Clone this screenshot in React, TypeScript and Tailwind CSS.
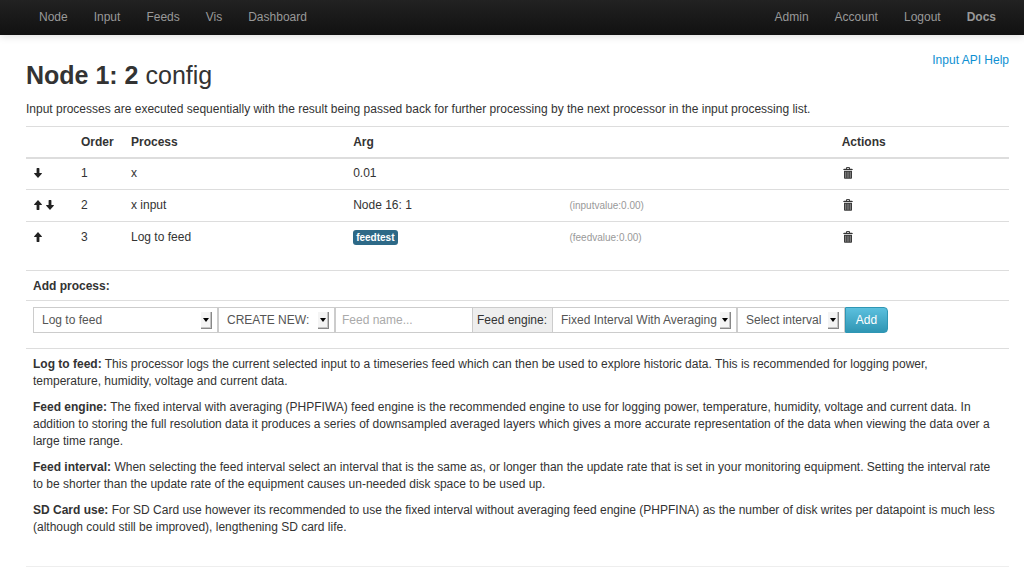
import type { ReactNode } from "react";

function ArrowIcon({ up = false }: { up?: boolean }) {
  return (
    <svg viewBox="0 0 8 10" className={up ? "h-[10px] w-2" : "h-[10px] w-2 rotate-180"} fill="#222" aria-hidden="true">
      <path d="M4 0 L8 4.6 Q8 5 7.6 5 H5.4 V9.6 Q5.4 10 5 10 H3 Q2.6 10 2.6 9.6 V5 H0.4 Q0 5 0 4.6 Z" />
    </svg>
  );
}

function TrashIcon() {
  return (
    <svg viewBox="0 0 10 12" className="h-3 w-[10px]" aria-hidden="true">
      <path d="M3.5 2 V0.5 H6.5 V2" fill="none" stroke="#444" />
      <path d="M0.2 3 Q0.2 1.8 1.4 1.8 H8.6 Q9.8 1.8 9.8 3 Z" fill="#333" />
      <path d="M1 3.8 H9 V11 Q9 11.8 8.2 11.8 H1.8 Q1 11.8 1 11 Z" fill="#3a3a3a" />
      <path d="M2.5 4.8 V10.8 M4.2 4.8 V10.8 M5.8 4.8 V10.8 M7.5 4.8 V10.8" stroke="#999" strokeWidth="0.7" />
    </svg>
  );
}

function NavLink({ children, bold = false }: { children: ReactNode; bold?: boolean }) {
  return (
    <a href="#" className={bold ? "px-[13px] font-bold hover:text-white" : "px-[13px] hover:text-white"}>
      {children}
    </a>
  );
}

function Select({
  label,
  options,
  className,
  id,
}: {
  label?: string;
  options: string[];
  className: string;
  id?: string;
}) {
  return (
    <div className={`relative h-[26px] shrink-0 ${className}`}>
      <select
        id={id}
        aria-label={label}
        className="h-full w-full appearance-none border border-[#ccc] bg-white pt-[2px] pl-2 text-[#555] outline-none"
      >
        {options.map((o) => (
          <option key={o}>{o}</option>
        ))}
      </select>
      <span className="pointer-events-none absolute top-[5px] right-[6px] flex h-[17px] w-[11px] items-center justify-center border-r border-b border-[#888] bg-[#f4f4f4] shadow-[inset_-1px_-1px_0_#c4c4c4]">
        <svg viewBox="0 0 6 4" className="h-1 w-[6px]" fill="#000" aria-hidden="true">
          <path d="M0 0 H6 L3 4 Z" />
        </svg>
      </span>
    </div>
  );
}

type Row = { order: number; process: string; arg: ReactNode; value?: string; up: boolean; down: boolean };

const rows: Row[] = [
  { order: 1, process: "x", arg: "0.01", up: false, down: true },
  { order: 2, process: "x input", arg: "Node 16: 1", value: "(inputvalue:0.00)", up: true, down: true },
  {
    order: 3,
    process: "Log to feed",
    arg: (
      <span className="inline-block rounded-[3px] bg-[#2d6987] px-[3px] text-[10px] leading-[15px] font-bold text-white">
        feedtest
      </span>
    ),
    value: "(feedvalue:0.00)",
    up: true,
    down: false,
  },
];

const notes = [
  {
    title: "Log to feed:",
    text: "This processor logs the current selected input to a timeseries feed which can then be used to explore historic data. This is recommended for logging power, temperature, humidity, voltage and current data.",
  },
  {
    title: "Feed engine:",
    text: "The fixed interval with averaging (PHPFIWA) feed engine is the recommended engine to use for logging power, temperature, humidity, voltage and current data. In addition to storing the full resolution data it produces a series of downsampled averaged layers which gives a more accurate representation of the data when viewing the data over a large time range.",
  },
  {
    title: "Feed interval:",
    text: "When selecting the feed interval select an interval that is the same as, or longer than the update rate that is set in your monitoring equipment. Setting the interval rate to be shorter than the update rate of the equipment causes un-needed disk space to be used up.",
  },
  {
    title: "SD Card use:",
    text: "For SD Card use however its recommended to use the fixed interval without averaging feed engine (PHPFINA) as the number of disk writes per datapoint is much less (although could still be improved), lengthening SD card life.",
  },
];

export default function App() {
  return (
    <div className="bg-white font-['Liberation_Sans',Arial,sans-serif] text-[12px] leading-[17px] text-[#333]">
      <header className="flex h-[35px] items-center justify-between bg-linear-to-b from-[#222] to-[#111] pr-[15px] pl-[26px] text-[#999] shadow-[0_1px_8px_rgba(0,0,0,0.15)]">
        <nav className="flex" aria-label="Main">
          <NavLink>Node</NavLink>
          <NavLink>Input</NavLink>
          <NavLink>Feeds</NavLink>
          <NavLink>Vis</NavLink>
          <NavLink>Dashboard</NavLink>
        </nav>
        <nav className="flex" aria-label="User">
          <NavLink>Admin</NavLink>
          <NavLink>Account</NavLink>
          <NavLink>Logout</NavLink>
          <NavLink bold>Docs</NavLink>
        </nav>
      </header>

      <main className="pt-[17px] pr-[15px] pl-[26px]">
        <div className="flex items-start justify-between">
          <h2 className="pt-[6px] text-[25px] leading-[34px]">
            <b>Node 1: 2</b> config
          </h2>
          <a href="#" className="text-[#0e90d2]">
            Input API Help
          </a>
        </div>
        <p className="mt-[9px] mb-[8px]">
          Input processes are executed sequentially with the result being passed back for further processing by the next
          processor in the input processing list.
        </p>

        <table className="w-full table-fixed border-collapse text-left">
          <colgroup>
            <col className="w-12" />
            <col className="w-[50px]" />
            <col className="w-[22.6%]" />
            <col className="w-[22%]" />
            <col className="w-[27.7%]" />
            <col />
          </colgroup>
          <thead>
            <tr className="h-[31px] border-t border-b-2 border-[#ddd]">
              <th className="px-[7px] pt-[2px]" aria-label="Move" />
              <th className="px-[7px] pt-[2px]">Order</th>
              <th className="px-[7px] pt-[2px]">Process</th>
              <th className="px-[7px] pt-[2px]">Arg</th>
              <th className="px-[7px] pt-[2px]" aria-label="Value" />
              <th className="px-[7px] pt-[2px]">Actions</th>
            </tr>
          </thead>
          <tbody className="divide-y divide-[#ddd]">
            {rows.map((r) => (
              <tr key={r.order} className="h-8">
                <td className="px-[7px] pb-[2px]">
                  <div className="flex gap-1 pl-[1px]">
                    {r.up && (
                      <button type="button" aria-label="Move up">
                        <ArrowIcon up />
                      </button>
                    )}
                    {r.down && (
                      <button type="button" aria-label="Move down">
                        <ArrowIcon />
                      </button>
                    )}
                  </div>
                </td>
                <td className="px-[7px]">{r.order}</td>
                <td className="px-[7px]">{r.process}</td>
                <td className="px-[7px]">{r.arg}</td>
                <td className="px-[7px] text-[10px] text-[#999]">{r.value}</td>
                <td className="px-[7px] pb-[2px]">
                  <button type="button" aria-label="Delete" className="ml-[1px] block">
                    <TrashIcon />
                  </button>
                </td>
              </tr>
            ))}
          </tbody>
        </table>

        <section className="mt-4">
          <h3 className="border-t border-[#ddd] px-[7px] pt-[7px] pb-[5px] font-bold">Add process:</h3>
          <form className="flex border-t border-[#ddd] px-[7px] pt-[6px] pb-[15px]">
            <Select label="Process" options={["Log to feed"]} className="w-[185px]" />
            <Select label="Feed" options={["CREATE NEW:"]} className="w-[117px]" />
            <input
              type="text"
              aria-label="Feed name"
              placeholder="Feed name..."
              className="h-[26px] w-[138px] shrink-0 border border-[#ccc] px-[6px] outline-none placeholder:text-[#aaa]"
            />
            <label
              htmlFor="engine"
              className="flex h-[26px] w-[79px] shrink-0 items-center border-y border-[#ccc] bg-[#eee] pt-[1px] pl-1"
            >
              Feed engine:
            </label>
            <Select id="engine" options={["Fixed Interval With Averaging"]} className="w-[185px]" />
            <Select label="Feed interval" options={["Select interval"]} className="w-[108px]" />
            <button
              type="button"
              className="h-[26px] w-[43px] rounded-r-[4px] border border-[#2f96b4] bg-linear-to-b from-[#5bc0de] to-[#2f96b4] pt-[1px] text-white"
            >
              Add
            </button>
          </form>
          <div className="flex flex-col gap-[9px] border-t border-[#ddd] pt-[7px] pr-[13px] pl-[7px]">
            {notes.map((n) => (
              <p key={n.title}>
                <b>{n.title}</b> {n.text}
              </p>
            ))}
          </div>
        </section>
        <hr className="mt-[30px] border-[#eee]" />
      </main>
    </div>
  );
}
